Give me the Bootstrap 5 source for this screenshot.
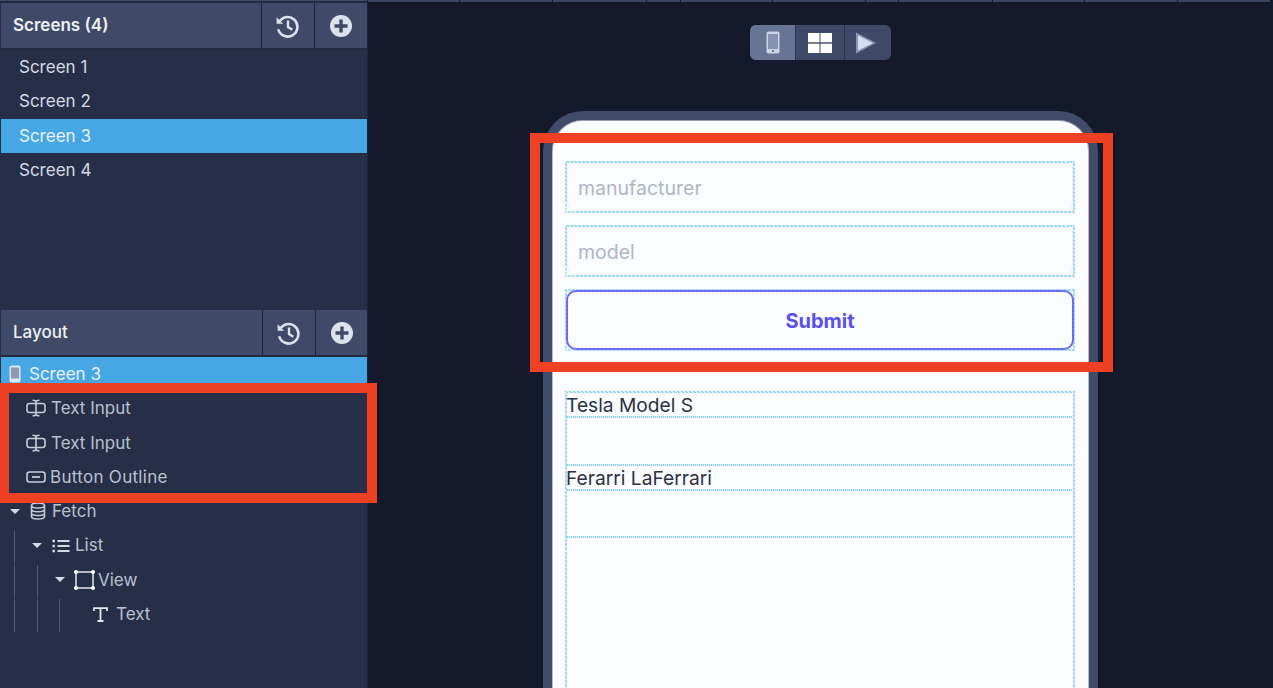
<!DOCTYPE html>
<html lang="en">
<head>
<meta charset="utf-8">
<title>Screens</title>
<link href="https://cdn.jsdelivr.net/npm/bootstrap@5.3.0/dist/css/bootstrap.min.css" rel="stylesheet">
<style>
html,body{height:688px;overflow:hidden;}
body{background:#141a2b;font-family:"Inter","Liberation Sans",sans-serif;color:#d5dbe6;position:relative;}
.side{width:368px;height:688px;background:#262f47;border-right:1px solid #1d2538;flex:none;padding:0 0 0 1px;overflow:hidden;}
.sidetop{height:3px;flex:none;margin-left:-1px;border-top:1px solid #3f4a68;background:#232b40;}
.pane1{height:307px;flex:none;}
.phead{height:45px;background:#3f4a68;}
.phead-title{flex:1;font-weight:600;font-size:17px;color:#eef1f6;padding-left:12px;line-height:45px;}
.phead-title.reg{font-weight:500;}
.phead-btn{width:53px;border-left:1px solid #1d2538;}
.b52{width:52px;}
.pdiv{border-bottom:2px solid #232b40;height:47px;}
.srow{height:34.3px;line-height:34.3px;padding-left:18px;font-size:17px;color:#d5dbe6;}
.srow.sel{background:#46a7e4;color:#e6f3fb;}
.trow{height:34.3px;line-height:34.3px;font-size:17px;color:#b9c1d0;position:relative;}
.trow svg{flex:none;}
.trow.sel{background:#46a7e4;color:#e6f3fb;}
.caret{width:0;height:0;border-left:5px solid transparent;border-right:5px solid transparent;border-top:5px solid #d5dbe6;flex:none;}
.guide{position:absolute;top:2px;bottom:-1px;width:1px;background:#4f5973;}
.tlabel1{margin-left:8px;}
.ti{margin-left:25px;margin-right:5px;}
.tb{margin-right:0;}
.lsp{letter-spacing:.3px;}
.c0{margin-left:9px;}.i0{margin-left:10px;margin-right:6px;}
.c1{margin-left:31px;}.i1{margin-left:10px;margin-right:5px;}
.c2{margin-left:54px;}.i2{margin-left:9px;margin-right:3px;}
.i3{margin-left:92px;margin-right:8px;}
.g1{left:13px;}.g2{left:36px;}.g3{left:58px;}
.main{flex:1;min-width:0;}
.tabstrip{height:2px;width:100%;flex:none;}
.tabseg{height:2px;background:#3a4562;border-right:1px solid #141a2b;flex:none;}
.w92{width:92px;}.w93{width:93px;}.w94{width:94px;}.w33{width:33px;}.w34{width:34px;}
.tools{margin-top:23px;height:35px;width:141px;border-radius:6px;overflow:hidden;background:#3f4a68;flex:none;}
.tool{flex:1;border-left:1px solid #2c3550;}
.tool.on{background:#677594;border-left:0;flex:0 0 45px;}
.tool.mid{flex:0 0 49px;}
.phone{margin-top:51px;width:555px;flex:1;min-height:0;border:9px solid #414c6a;border-bottom:0;border-radius:40px 40px 0 0;background:#fbfcfe;padding:41px 14px 0 13px;box-shadow:inset 0 1px 0 #9aa0ad,inset 1px 0 0 #b5bac5,inset -1px 0 0 #b5bac5;}
.dots{border:2px solid #a5daf5;border-image:repeating-linear-gradient(45deg,#8fd0f3 0 1.41px,#d8eefb 1.41px 2.83px) 2;flex:none;}
.field{height:52px;margin-bottom:12px;padding:0;}
.finner{height:100%;border:1px solid #f1f2f5;border-radius:8px;padding-left:10px;line-height:48px;font-size:19.5px;color:#aeb6c5;}
.subm{height:62px;padding:0;}
.subm-in{margin:-1px;height:60px;border:2px solid #6a6cf6;border-radius:10px;background:#fbfcfe;color:#5a50f0;font-weight:700;font-size:20px;line-height:58px;text-align:center;}
.lst{margin-top:40px;flex:1 1 0;min-height:0;border-bottom-width:0;}
.lt{height:23px;line-height:24px;margin-left:-1px;font-size:19.2px;color:#2a3145;white-space:nowrap;}
.lv{height:45.5px;}
.rule{height:2px;background:repeating-linear-gradient(90deg,#8fd0f3 0 1px,#d8eefb 1px 2px);}
.redbox{position:absolute;border:10px solid #ee4023;pointer-events:none;}
.r1{left:530px;top:133px;width:583px;height:239px;}
.r2{left:-1px;top:383px;width:378px;height:120px;}
</style>
</head>
<body class="d-flex">
<aside class="side d-flex flex-column">
  <div class="sidetop"></div>
  <div class="pane1">
    <div class="pdiv">
      <div class="phead d-flex">
        <div class="phead-title">Screens (4)</div>
        <div class="phead-btn d-flex align-items-center justify-content-center">
          <svg width="26" height="26" viewBox="1 0 24 24" fill="none" stroke="#dbe2ee" stroke-width="2.4"><path d="M4.5 9A9 9 0 1 1 4 15"/><path d="M2.5 4v6h6" fill="#dbe2ee" stroke="none"/><path d="M13 7v6l4 2.5" stroke-width="2.2"/></svg>
        </div>
        <div class="phead-btn d-flex align-items-center justify-content-center">
          <svg width="24" height="24" viewBox="0 0 24 24"><circle cx="12" cy="12" r="11" fill="#dbe2ee"/><path d="M12 5.5v13M5.5 12h13" stroke="#3f4a68" stroke-width="3.4"/></svg>
        </div>
      </div>
    </div>
    <div class="srow">Screen 1</div>
    <div class="srow">Screen 2</div>
    <div class="srow sel">Screen 3</div>
    <div class="srow">Screen 4</div>
  </div>
  <div>
    <div class="pdiv">
      <div class="phead d-flex">
        <div class="phead-title reg">Layout</div>
        <div class="phead-btn d-flex align-items-center justify-content-center">
          <svg width="26" height="26" viewBox="1 0 24 24" fill="none" stroke="#dbe2ee" stroke-width="2.4"><path d="M4.5 9A9 9 0 1 1 4 15"/><path d="M2.5 4v6h6" fill="#dbe2ee" stroke="none"/><path d="M13 7v6l4 2.5" stroke-width="2.2"/></svg>
        </div>
        <div class="phead-btn b52 d-flex align-items-center justify-content-center">
          <svg width="24" height="24" viewBox="0 0 24 24"><circle cx="12" cy="12" r="11" fill="#dbe2ee"/><path d="M12 5.5v13M5.5 12h13" stroke="#3f4a68" stroke-width="3.4"/></svg>
        </div>
      </div>
    </div>
    <div class="trow sel d-flex align-items-center">
      <svg class="ms-2" width="12" height="18" viewBox="0 0 12 18"><rect x="0.5" y="0.5" width="11" height="17" rx="2" fill="#dbe9f5"/><rect x="2" y="2.5" width="8" height="11" fill="#8c9ab4"/></svg>
      <span class="tlabel1">Screen 3</span>
    </div>
    <div class="trow d-flex align-items-center">
      <svg class="ti" width="20" height="18" viewBox="0 0 20 18" fill="none" stroke="#c6cdd9" stroke-width="1.6"><rect x="1" y="4.5" width="18" height="9" rx="2.5"/><path d="M10 2v14M6.500 1.200c1.500 0 3.500.6 3.500 1.500 0-.9 2-1.500 3.500-1.500M6.500 16.800c1.500 0 3.500-.6 3.500-1.500 0 .9 2 1.500 3.500 1.500"/></svg>
      <span>Text Input</span>
    </div>
    <div class="trow d-flex align-items-center">
      <svg class="ti" width="20" height="18" viewBox="0 0 20 18" fill="none" stroke="#c6cdd9" stroke-width="1.6"><rect x="1" y="4.5" width="18" height="9" rx="2.5"/><path d="M10 2v14M6.500 1.200c1.500 0 3.500.6 3.500 1.500 0-.9 2-1.500 3.500-1.500M6.500 16.800c1.500 0 3.500-.6 3.500-1.500 0 .9 2 1.500 3.500 1.500"/></svg>
      <span>Text Input</span>
    </div>
    <div class="trow d-flex align-items-center">
      <svg class="ti tb" width="20" height="12" viewBox="0 0 20 12" fill="none" stroke="#c6cdd9" stroke-width="1.6"><rect x="1" y="1" width="18" height="10" rx="2.5"/><path d="M6 6h8" stroke-width="1.800"/></svg>
      <span class="ms-1 lsp">Button Outline</span>
    </div>
    <div class="trow d-flex align-items-center">
      <span class="caret c0"></span>
      <svg class="i0" width="16" height="18" viewBox="0 0 16 18" fill="none" stroke="#c6cdd9" stroke-width="1.500"><ellipse cx="8" cy="3.500" rx="6.500" ry="2.500"/><path d="M1.500 3.500v11c0 1.400 2.900 2.500 6.500 2.500s6.500-1.100 6.500-2.500v-11M1.500 7.200c0 1.400 2.900 2.500 6.500 2.500s6.500-1.100 6.500-2.500M1.500 11c0 1.400 2.900 2.500 6.500 2.500s6.500-1.100 6.500-2.500"/></svg>
      <span>Fetch</span>
    </div>
    <div class="trow d-flex align-items-center">
      <span class="guide g1"></span>
      <span class="caret c1"></span>
      <svg class="i1" width="18" height="14" viewBox="0 0 18 14" fill="none" stroke="#d5dbe6" stroke-width="1.800"><path d="M5.500 2h12M5.500 7h12M5.500 12h12"/><path d="M.5 2h2.400M.5 7h2.400M.5 12h2.400" stroke-width="2.400"/></svg>
      <span>List</span>
    </div>
    <div class="trow d-flex align-items-center">
      <span class="guide g1"></span><span class="guide g2"></span>
      <span class="caret c2"></span>
      <svg class="i2" width="21" height="20" viewBox="0 0 21 20" fill="none" stroke="#e4e8ef" stroke-width="1.500"><rect x="2" y="2" width="17" height="16"/><g fill="#fff" stroke="none"><circle cx="2" cy="2" r="2"/><circle cx="19" cy="2" r="2"/><circle cx="2" cy="18" r="2"/><circle cx="19" cy="18" r="2"/></g></svg>
      <span>View</span>
    </div>
    <div class="trow d-flex align-items-center">
      <span class="guide g1"></span><span class="guide g2"></span><span class="guide g3"></span>
      <svg class="i3" width="15" height="15" viewBox="0 0 15 15" fill="none" stroke="#e4e8ef" stroke-width="1.800"><path d="M1 4V1.200h13V4M7.500 1.200v12.800M4.500 14h6"/></svg>
      <span>Text</span>
    </div>
  </div>
</aside>
<main class="main d-flex flex-column align-items-center">
  <div class="tabstrip d-flex">
    <span class="tabseg w92"></span><span class="tabseg w93"></span><span class="tabseg w94"></span><span class="tabseg w34"></span><span class="tabseg w92"></span><span class="tabseg w93"></span><span class="tabseg w33"></span><span class="tabseg w94"></span><span class="tabseg w92"></span><span class="tabseg w93"></span><span class="tabseg w93"></span>
  </div>
  <div class="tools d-flex">
    <div class="tool on d-flex align-items-center justify-content-center">
      <svg width="14" height="23" viewBox="0 0 14 23"><rect x="0.500" y="0.500" width="13" height="22" rx="2" fill="#c9d3e3"/><rect x="2" y="3" width="10" height="15" fill="#8593b0"/><circle cx="7" cy="20" r="1" fill="#4c5874"/></svg>
    </div>
    <div class="tool mid d-flex align-items-center justify-content-center">
      <svg width="24" height="20" viewBox="0 0 24 20" fill="#fff"><rect width="11.500" height="9.300"/><rect x="12.500" width="11.500" height="9.300"/><rect y="10.700" width="11.500" height="9.300"/><rect x="12.500" y="10.700" width="11.500" height="9.300"/></svg>
    </div>
    <div class="tool d-flex align-items-center justify-content-center">
      <svg class="me-1" width="22" height="24" viewBox="0 0 22 24"><path d="M1 1.500 21 12 1 22.500z" fill="#8795b2"/><path d="M3 4.500 18 12 3 19.500z" fill="#d3dff0"/></svg>
    </div>
  </div>
  <div class="phone d-flex flex-column">
    <div class="dots field"><div class="finner">manufacturer</div></div>
    <div class="dots field"><div class="finner">model</div></div>
    <div class="dots subm"><div class="subm-in">Submit</div></div>
    <div class="dots lst">
      <div class="lt">Tesla Model S</div>
      <div class="rule"></div>
      <div class="lv"></div>
      <div class="rule"></div>
      <div class="lt">Ferarri LaFerrari</div>
      <div class="rule"></div>
      <div class="lv"></div>
      <div class="rule"></div>
    </div>
  </div>
</main>
<div class="redbox r1"></div>
<div class="redbox r2"></div>
</body>
</html>
